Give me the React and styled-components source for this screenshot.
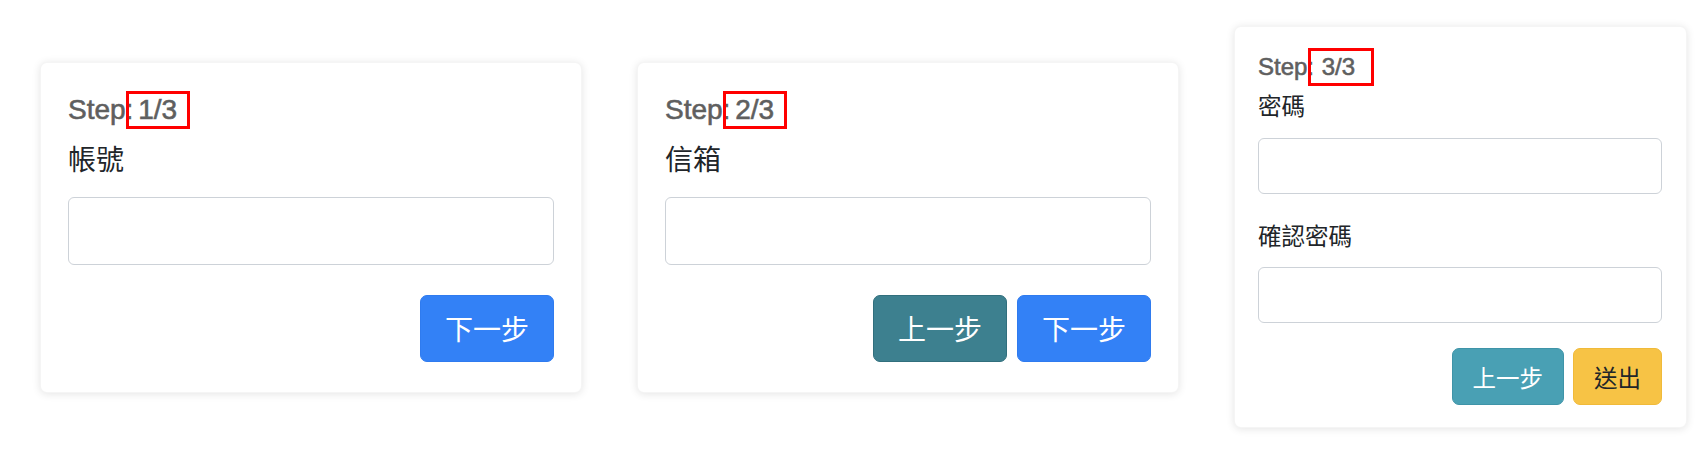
import React from "react";
import styled, { createGlobalStyle, css } from "styled-components";

const Global = createGlobalStyle`
  html, body { margin: 0; padding: 0; background: #ffffff; }
  body { font-family: "Liberation Sans", "Noto Sans CJK TC", sans-serif; }
  * { box-sizing: border-box; }
`;

const S = {
  lg: { font: 28, step: 28, line: 42, input: 68, btnH: 67, btnPad: 24, pad: "28px 27px 30px 27px", width: 542, markW: 64, markPad: 9, markShift: 15 },
  sm: { font: 23.5, step: 24, line: 35, input: 56, btnH: 57, btnPad: 20, pad: "21px 24px 22px 23px", width: 453, markW: 66, markPad: 11, markShift: 13 },
};

const Page = styled.div`
  height: 454px;
  display: flex;
  align-items: center;
  gap: 55px;
  padding-left: 40px;
`;

const Card = styled.div`
  width: ${(p) => S[p.$size].width}px;
  padding: ${(p) => S[p.$size].pad};
  background: #fff;
  border-radius: 7px;
  border: 1px solid rgba(0, 0, 0, 0.04);
  box-shadow: 0 1px 9px rgba(0, 0, 0, 0.11);
  display: flex;
  flex-direction: column;
`;

const StepTitle = styled.div`
  height: 38px;
  display: flex;
  align-items: center;
  font-family: "Liberation Sans", sans-serif;
  font-size: ${(p) => S[p.$size].step}px;
  color: #5f5f5f;
  white-space: pre;
  -webkit-text-stroke: 0.6px #5f5f5f;
`;

const Mark = styled.span`
  display: inline-flex;
  align-items: center;
  flex: none;
  height: 38px;
  width: ${(p) => S[p.$size].markW}px;
  margin-left: -${(p) => S[p.$size].markShift}px;
  padding-left: ${(p) => S[p.$size].markPad}px;
  border: 3px solid #ff0000;
`;

const Label = styled.label`
  display: block;
  font-family: "Noto Sans CJK TC", "Liberation Sans", sans-serif;
  font-size: ${(p) => S[p.$size].font}px;
  line-height: ${(p) => S[p.$size].line}px;
  color: #212529;
  margin-top: ${(p) => p.$mt}px;
`;

const Input = styled.input`
  display: block;
  width: 100%;
  height: ${(p) => S[p.$size].input}px;
  margin-top: ${(p) => p.$mt}px;
  border: 1.5px solid #cdd2d8;
  border-radius: 6px;
  background: #fff;
  outline: none;
`;

const Actions = styled.div`
  display: flex;
  justify-content: flex-end;
  gap: ${(p) => (p.$size === "lg" ? 10 : 9)}px;
  margin-top: ${(p) => p.$mt}px;
`;

const variants = {
  primary: css`background: #3381f6; border-color: #2f7bef; color: #fff;`,
  dark: css`background: #3d808f; border-color: #316f7d; color: #fff;`,
  info: css`background: #49a0b4; border-color: #3f94a8; color: #fff;`,
  warning: css`background: #f7c345; border-color: #f0ba3a; color: #212529;`,
};

const Button = styled.button`
  height: ${(p) => S[p.$size].btnH}px;
  padding: 0 ${(p) => S[p.$size].btnPad}px;
  font-family: "Noto Sans CJK TC", "Liberation Sans", sans-serif;
  font-size: ${(p) => S[p.$size].font}px;
  border: 1.5px solid transparent;
  border-radius: 7px;
  cursor: pointer;
  ${(p) => variants[p.$variant]}
`;

function Step({ size, n }) {
  return (
    <StepTitle $size={size}>
      {"Step: "}
      <Mark $size={size}>{n}/3</Mark>
    </StepTitle>
  );
}

export default function App() {
  return (
    <>
      <Global />
      <Page>
        <Card $size="lg">
          <Step size="lg" n={1} />
          <Label $size="lg" $mt={8}>帳號</Label>
          <Input $size="lg" $mt={18} />
          <Actions $size="lg" $mt={30}>
            <Button $size="lg" $variant="primary">下一步</Button>
          </Actions>
        </Card>
        <Card $size="lg">
          <Step size="lg" n={2} />
          <Label $size="lg" $mt={8}>信箱</Label>
          <Input $size="lg" $mt={18} />
          <Actions $size="lg" $mt={30}>
            <Button $size="lg" $variant="dark">上一步</Button>
            <Button $size="lg" $variant="primary">下一步</Button>
          </Actions>
        </Card>
        <Card $size="sm">
          <Step size="sm" n={3} />
          <Label $size="sm" $mt={2}>密碼</Label>
          <Input $size="sm" $mt={15} />
          <Label $size="sm" $mt={24}>確認密碼</Label>
          <Input $size="sm" $mt={14} />
          <Actions $size="sm" $mt={25}>
            <Button $size="sm" $variant="info">上一步</Button>
            <Button $size="sm" $variant="warning">送出</Button>
          </Actions>
        </Card>
      </Page>
    </>
  );
}
